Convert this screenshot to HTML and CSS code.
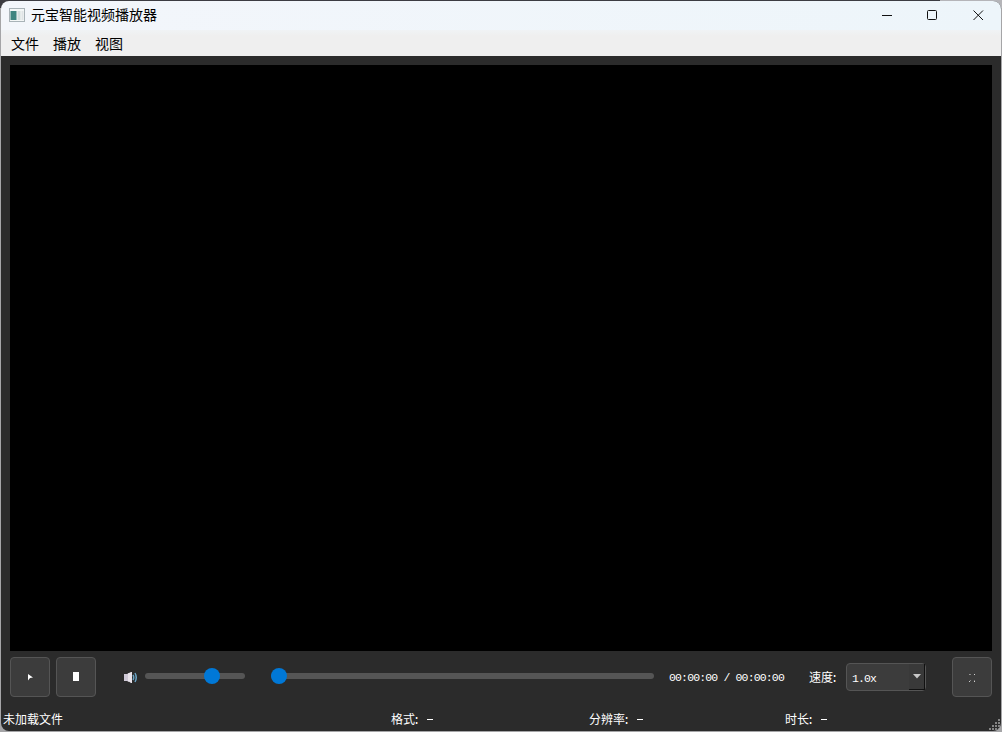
FILE: index.html
```html
<!DOCTYPE html>
<html lang="zh-CN">
<head>
  <meta charset="UTF-8" />
  <title>元宝智能视频播放器</title>
  <link rel="stylesheet" href="styles.css">
</head>
<body>
  <div class="window">
    <div class="title-bar">
      <svg class="app-icon" width="16" height="14" viewBox="0 0 16 14">
        <rect x="0.5" y="0.5" width="15" height="13" fill="#f4f7f7" stroke="#a9b3b8" />
        <rect x="1.5" y="3" width="6" height="9" fill="#3f8580" />
        <rect x="8.5" y="3" width="3" height="9" fill="#d3dddd" />
        <rect x="12.5" y="3" width="2" height="9" fill="#dfe4e6" />
      </svg>
      <span class="title">元宝智能视频播放器</span>
      <div class="window-buttons">
        <svg width="46" height="28" viewBox="0 0 46 28" fill="none" stroke="#111">
          <path d="M19 14.5h10" />
        </svg>
        <svg width="46" height="28" viewBox="0 0 46 28" fill="none" stroke="#111">
          <rect x="18.5" y="9.5" width="9" height="9" rx="1" />
        </svg>
        <svg width="46" height="28" viewBox="0 0 46 28" fill="none" stroke="#111">
          <path d="M18.500 9.500l9.500 9.500M28 9.500l-9.500 9.500" />
        </svg>
      </div>
    </div>

    <div class="menu-bar">
      <span>文件</span>
      <span>播放</span>
      <span>视图</span>
    </div>

    <div class="video"></div>

    <div class="controls">
      <button class="btn" type="button">
        <svg width="6" height="8" viewBox="0 0 6 8"><path d="M1 1L6 4.500L3 5L1 7.500z" fill="#fff" /></svg>
      </button>
      <button class="btn stop" type="button">
        <svg width="6" height="9" viewBox="0 0 6 9"><rect width="6" height="9" fill="#fff" /></svg>
      </button>
      <svg class="speaker" width="13" height="11" viewBox="0 0 13 11">
        <path d="M0 2h3l2-1v9l-2-1H0z" fill="#cfc8d6" />
        <path d="M4 1.500l3-1.500h1v11H7L4 9z" fill="#e9e3ea" />
        <path d="M9 3q1.500 2.500 0 5M11 1q2.500 4.500 0 9" fill="none" stroke="#6aa3c4" stroke-width="1.500" />
      </svg>
      <div class="slider volume"><div class="handle" style="left: 59px"></div></div>
      <div class="slider progress"><div class="handle" style="left: 0px"></div></div>
      <span class="time">00:00:00 / 00:00:00</span>
      <span class="speed-label">速度<b class="colon">:</b></span>
      <div class="speed">
        <span>1.0x</span>
        <div class="drop">
          <svg width="8" height="5" viewBox="0 0 8 5"><path d="M0 0h8L4 4.500z" fill="#c8c8c8" /></svg>
        </div>
      </div>
      <button class="btn fullscreen" type="button">
        <svg width="7" height="9" viewBox="0 0 7 9" fill="#d0d0d0">
          <rect x="0" y="1" width="1" height="1" opacity=".6" /><rect x="1" y="1" width="1" height="1" opacity=".5" />
          <rect x="5" y="1" width="1" height="1" />
          <rect x="0" y="8" width="1" height="1" /><rect x="5" y="8" width="1" height="1" />
          <rect x="1" y="7" width="1" height="1" opacity=".5" /><rect x="5" y="7" width="1" height="1" opacity=".4" />
        </svg>
      </button>
    </div>

    <div class="status-bar">
      <span>未加载文件</span>
      <span>格式<b class="colon">:</b> <i class="dash"></i></span>
      <span>分辨率<b class="colon">:</b> <i class="dash"></i></span>
      <span>时长<b class="colon">:</b> <i class="dash"></i></span>
      <svg class="grip" width="12" height="12" viewBox="0 0 12 12" fill="#858585">
        <rect x="9" y="0" width="2" height="2" />
        <rect x="6" y="3" width="2" height="2" /><rect x="9" y="3" width="2" height="2" />
        <rect x="3" y="6" width="2" height="2" /><rect x="6" y="6" width="2" height="2" /><rect x="9" y="6" width="2" height="2" />
        <rect x="0" y="9" width="2" height="2" /><rect x="3" y="9" width="2" height="2" /><rect x="6" y="9" width="2" height="2" /><rect x="9" y="9" width="2" height="2" />
      </svg>
    </div>
  </div>
</body>
</html>
```
FILE: styles.css
```css
* {
  box-sizing: border-box;
}

body {
  margin: 0;
  width: 1002px;
  height: 732px;
  padding: 1px;
  overflow: hidden;
  background: linear-gradient(90deg, #3c3c42 0, #3c3c42 940px, #b5b5b9 940px) no-repeat 0 0 / 100% 8px, #a5a5a7;
  font-family: "Liberation Mono", "Noto Sans CJK SC", monospace;
  font-size: 12px;
  color: #fff;
}

.window {
  display: flex;
  flex-direction: column;
  width: 1000px;
  height: 730px;
  border-radius: 8px;
  overflow: hidden;
  background: #2b2b2b;
}

.title-bar,
.menu-bar {
  display: flex;
  align-items: center;
  font-family: "Noto Sans CJK SC", sans-serif;
  font-size: 14px;
  color: #000;
}

.title-bar {
  height: 29px;
  padding: 0 0 2px 8px;
  background: linear-gradient(90deg, #f3f6fb, #edf5fa);
}

.title {
  margin: -2px 0 0 6px;
  line-height: 26px;
}

.app-icon {
  flex: none;
}

.window-buttons {
  display: flex;
  margin-left: auto;
}

.menu-bar {
  height: 26px;
  padding-left: 10px;
  gap: 14px;
  background: linear-gradient(#f0f3f5, #efefef 6px);
  line-height: 26px;
}

.video {
  height: 586px;
  margin: 9px 9px 0;
  background: #000;
}

.controls {
  display: flex;
  align-items: center;
  height: 52px;
  padding: 0 9px;
}

.btn {
  display: flex;
  align-items: center;
  justify-content: center;
  flex: none;
  width: 40px;
  height: 40px;
  padding: 0;
  border: 1px solid #555;
  border-radius: 4px;
  background: #3c3c3c;
}

.stop {
  margin-left: 6px;
}

.stop svg {
  margin-bottom: 1px;
}

.speaker {
  flex: none;
  margin: 1px 8px 0 28px;
}

.slider {
  position: relative;
  flex: none;
  height: 6px;
  margin-top: -2px;
  border-radius: 3px;
  background: #555;
}

.volume {
  width: 100px;
}

.progress {
  width: 383px;
  margin-left: 26px;
}

.handle {
  position: absolute;
  top: -5px;
  width: 16px;
  height: 16px;
  border-radius: 50%;
  background: #0078d7;
}

.time {
  width: 125px;
  margin-left: 15px;
  padding-top: 1px;
  font-size: 11.5px;
  letter-spacing: -0.85px;
  white-space: nowrap;
}

.speed-label {
  width: 37px;
  margin-left: 15px;
  white-space: nowrap;
}

.colon {
  margin: 0 1px 0 -2px;
  font-weight: normal;
}

.speed {
  display: flex;
  align-items: center;
  flex: none;
  width: 80px;
  height: 28px;
  padding-left: 5px;
  border: 1px solid #555;
  border-radius: 4px;
  background: #3c3c3c;
  font-size: 11.5px;
  letter-spacing: -0.9px;
}

.speed span {
  padding-top: 2px;
}

.drop {
  display: flex;
  align-items: center;
  justify-content: center;
  width: 16px;
  height: 26px;
  margin-left: auto;
  border-right: 1px solid #111;
  border-bottom: 1px solid #111;
  background: #393939;
}

.fullscreen {
  margin-left: auto;
}

.status-bar {
  display: grid;
  grid-template-columns: 388px 198px 196px 1fr 12px;
  align-items: center;
  height: 28px;
  padding-left: 2px;
  line-height: 18px;
}

.status-bar span {
  padding-top: 7px;
  white-space: pre;
}

.dash {
  display: inline-block;
  width: 6px;
  height: 1px;
  margin: 0 0 4px -1px;
  background: #fff;
}

.grip {
  align-self: end;
}
```
